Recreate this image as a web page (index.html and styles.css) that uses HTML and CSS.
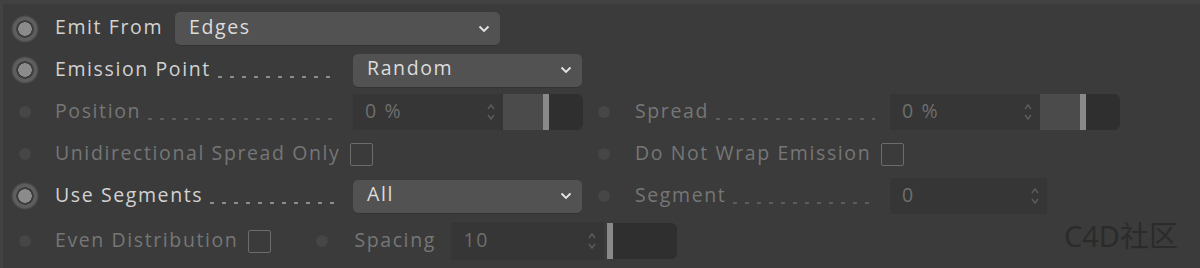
FILE: index.html
```html
<!DOCTYPE html>
<html>
<head>
<meta charset="utf-8">
<link rel="stylesheet" href="styles.css">
</head>
<body>
<div class="panel">
  <div class="row r1">
    <span class="ico"><span class="radio"></span></span>
    <span class="lbl on">Emit From</span>
    <div class="drop d-emit"><span>Edges</span><svg class="chev" width="12" height="8" viewBox="0 0 12 8"><path d="M1.5 1.5 L6 6 L10.5 1.5" fill="none" stroke="#e6e6e6" stroke-width="1.8"/></svg></div>
  </div>

  <div class="row">
    <div class="half">
      <span class="ico"><span class="radio"></span></span>
      <span class="lbl on lead"><span>Emission Point</span><i class="dots"></i></span>
      <div class="drop"><span>Random</span><svg class="chev" width="12" height="8" viewBox="0 0 12 8"><path d="M1.5 1.5 L6 6 L10.5 1.5" fill="none" stroke="#e6e6e6" stroke-width="1.8"/></svg></div>
    </div>
  </div>

  <div class="row">
    <div class="half">
      <span class="ico"><span class="dot"></span></span>
      <span class="lbl off lead"><span>Position</span><i class="dots"></i></span>
      <div class="num"><span class="val">0 %</span><svg class="spin" width="10" height="22" viewBox="0 0 10 22"><path d="M2 8 L5 4 L8 8 M2 14 L5 18 L8 14" fill="none" stroke="#5c5c5c" stroke-width="1.4"/></svg></div>
      <div class="slider"><span class="fill"></span><span class="knob"></span><span class="rest"></span></div>
    </div>
    <div class="half right">
      <span class="ico"><span class="dot"></span></span>
      <span class="lbl off lead"><span>Spread</span><i class="dots"></i></span>
      <div class="num"><span class="val">0 %</span><svg class="spin" width="10" height="22" viewBox="0 0 10 22"><path d="M2 8 L5 4 L8 8 M2 14 L5 18 L8 14" fill="none" stroke="#5c5c5c" stroke-width="1.4"/></svg></div>
      <div class="slider"><span class="fill"></span><span class="knob"></span><span class="rest"></span></div>
    </div>
  </div>

  <div class="row">
    <div class="half">
      <span class="ico"><span class="dot"></span></span>
      <span class="lbl off auto">Unidirectional Spread Only</span>
      <span class="check"></span>
    </div>
    <div class="half right">
      <span class="ico"><span class="dot"></span></span>
      <span class="lbl off auto">Do Not Wrap Emission</span>
      <span class="check"></span>
    </div>
  </div>

  <div class="row">
    <div class="half">
      <span class="ico"><span class="radio"></span></span>
      <span class="lbl on lead"><span>Use Segments</span><i class="dots"></i></span>
      <div class="drop"><span>All</span><svg class="chev" width="12" height="8" viewBox="0 0 12 8"><path d="M1.5 1.5 L6 6 L10.5 1.5" fill="none" stroke="#e6e6e6" stroke-width="1.8"/></svg></div>
    </div>
    <div class="half right">
      <span class="ico"><span class="dot"></span></span>
      <span class="lbl off lead"><span>Segment</span><i class="dots"></i></span>
      <div class="num seg"><span class="val">0</span><svg class="spin" width="10" height="22" viewBox="0 0 10 22"><path d="M2 8 L5 4 L8 8 M2 14 L5 18 L8 14" fill="none" stroke="#5c5c5c" stroke-width="1.4"/></svg></div>
    </div>
  </div>

  <div class="row r6">
    <span class="ico"><span class="dot"></span></span>
    <span class="lbl off auto">Even Distribution</span>
    <span class="check"></span>
    <span class="ico ico6"><span class="dot"></span></span>
    <span class="lbl off sp">Spacing</span>
    <div class="num n6"><span class="val">10</span><svg class="spin" width="10" height="22" viewBox="0 0 10 22"><path d="M2 8 L5 4 L8 8 M2 14 L5 18 L8 14" fill="none" stroke="#5c5c5c" stroke-width="1.4"/></svg></div>
    <div class="slider s6"><span class="knob"></span><span class="rest"></span></div>
  </div>

  <div class="mark">C4D社区</div>
</div>
</body>
</html>
```

FILE: styles.css
```css
html, body {
  margin: 0;
  padding: 0;
  background: #3b3b3b;
}
.panel {
  position: relative;
  width: 1200px;
  height: 268px;
  box-sizing: border-box;
  padding-top: 6px;
  background: #3b3b3b;
  border-top: 4px solid #414141;
  border-left: 3px solid #424242;
  font-family: "Open Sans", "Noto Sans", sans-serif;
  font-size: 19.5px;
  letter-spacing: 1.6px;
  overflow: hidden;
}
.row {
  display: flex;
  align-items: center;
  height: 42px;
  margin-left: -3px;
}
.r1 { margin-top: -2px; height: 41px; }
.r6 { height: 44px; margin-top: 2px; }
.half {
  display: flex;
  align-items: center;
  width: 582px;
  height: 100%;
}
.half.right { width: 540px; }
.ico {
  width: 50px;
  height: 100%;
  display: flex;
  align-items: center;
  justify-content: center;
  flex: none;
}
.right .ico { width: 44px; }
.radio {
  width: 28px;
  height: 28px;
  border-radius: 50%;
  background: radial-gradient(circle, #8b8b8b 0 6.5px, #3e3e3e 7px 8.5px, #5e5e5e 9px 11.5px, rgba(94,94,94,0) 14px);
}
.dot {
  width: 12px;
  height: 12px;
  border-radius: 50%;
  background: #464646;
}
.lbl {
  flex: none;
  padding-left: 5px;
  white-space: nowrap;
  line-height: 1;
  padding-bottom: 3px;
}
.right .lbl { padding-left: 9px; }
.on { color: #d2d2d2; }
.off { color: #767676; }
.lead {
  display: flex;
  align-items: flex-end;
  width: 303px;
  box-sizing: border-box;
  padding-right: 15px;
}
.right .lead { width: 264px; }
.dots {
  flex: 1;
  height: 2px;
  margin-left: 7px;
  background-image: linear-gradient(to right, #8c8c8c 0 4px, transparent 4px);
  background-size: 12px 2px;
  background-repeat: repeat-x;
}
.off .dots {
  background-image: linear-gradient(to right, #5c5c5c 0 4px, transparent 4px);
}
.drop {
  display: flex;
  align-items: center;
  justify-content: space-between;
  width: 229px;
  height: 33px;
  box-sizing: border-box;
  padding: 0 10px 2px 14px;
  background: #525252;
  border-radius: 5px;
  box-shadow: 0 1px 0 #333;
  color: #dcdcdc;
  flex: none;
}
.drop span { line-height: 1; padding-bottom: 2px; }
.d-emit {
  width: 325px;
  margin-left: 12px;
}
.chev { flex: none; margin-top: 2px; }
.num {
  display: flex;
  align-items: center;
  justify-content: space-between;
  width: 150px;
  height: 36px;
  box-sizing: border-box;
  padding: 0 7px 0 12px;
  background: #363636;
  flex: none;
}
.num .val { color: #6e6e6e; line-height: 1; padding-bottom: 2px; }
.seg { width: 157px; }
.slider {
  display: flex;
  width: 80px;
  height: 36px;
  flex: none;
}
.slider .fill { width: 40px; background: #4b4b4b; }
.slider .knob { width: 6px; background: #888a8a; }
.slider .rest { flex: 1; background: #2f2f2f; border-radius: 0 6px 6px 0; }
.s6 { width: 70px; margin-left: 3px; }
.check {
  width: 21px;
  height: 21px;
  border: 1.5px solid #6c6c6c;
  border-radius: 2px;
  flex: none;
  margin-left: 10px;
}
.ico6 { width: 46px; margin-left: 28px; }
.sp { width: 106px; box-sizing: border-box; padding-left: 9px; }
.n6 { width: 153px; height: 38px; }
.mark {
  position: absolute;
  right: 22px;
  bottom: 18px;
  font-family: "Noto Sans", "Noto Sans CJK SC", sans-serif;
  font-size: 29px;
  letter-spacing: 0;
  color: #2b2b2b;
  line-height: 1;
}
```
